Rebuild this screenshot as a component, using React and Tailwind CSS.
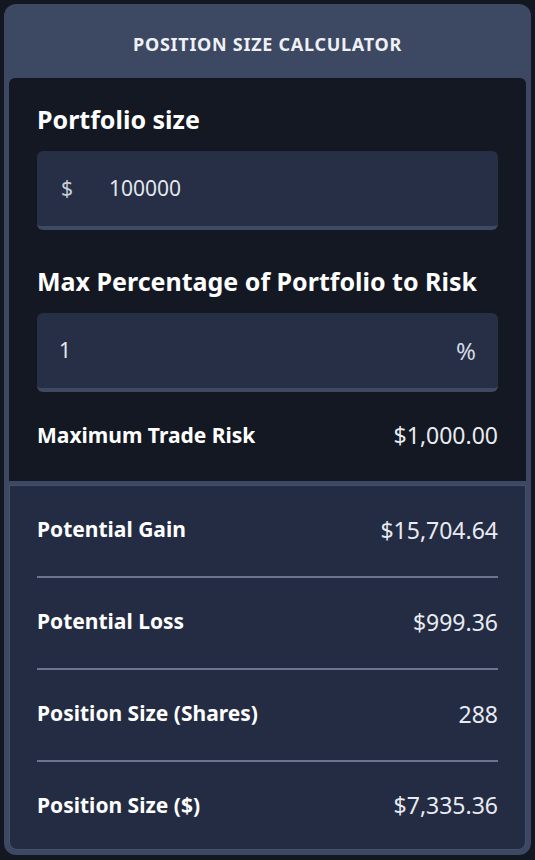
export default function App() {
  const rows = [
    { label: 'Potential Gain', value: '$15,704.64' },
    { label: 'Potential Loss', value: '$999.36' },
    { label: 'Position Size (Shares)', value: '288' },
    { label: 'Position Size ($)', value: '$7,335.36' },
  ];

  return (
    <div
      className="w-[535px] h-[860px] bg-[#121722] p-1 text-white"
      style={{ fontFamily: '"Noto Sans", "Open Sans", sans-serif' }}
    >
      <div className="h-[851px] rounded-xl bg-[#3d4862] px-[5px] pb-[5px] flex flex-col">
        <div className="h-[74px] shrink-0 flex items-center justify-center pt-[6px] text-[18px] font-bold tracking-[0.04em] text-[#eef1f6]">
          POSITION SIZE CALCULATOR
        </div>

        {/* inputs */}
        <div className="shrink-0 bg-[#131822] rounded-t-md px-7 pt-[24px] pb-[28px]">
          <div className="text-[25px] font-bold leading-[34px] mb-[15px]">Portfolio size</div>
          <div className="h-[79px] rounded-md bg-[#262f46] border-b-[4px] border-[#3f4963] flex items-center px-6 text-[21px] text-[#e3e7ee]">
            <span className="w-[48px] text-[#c9cfdb]">$</span>
            <span>100000</span>
          </div>

          <div className="text-[25px] font-bold leading-[34px] mt-[34px] mb-[15px]">Max Percentage of Portfolio to Risk</div>
          <div className="h-[79px] rounded-md bg-[#262f46] border-b-[4px] border-[#3f4963] flex items-center justify-between px-[22px] text-[21px] text-[#e3e7ee]">
            <span>1</span>
            <span className="text-[24px] text-[#d5dae3]">%</span>
          </div>

          <div className="flex items-center justify-between mt-[26px]">
            <span className="text-[21px] font-bold">Maximum Trade Risk</span>
            <span className="text-[23px] text-[#e8ebf1]">$1,000.00</span>
          </div>
        </div>

        {/* results */}
        <div className="mt-[4px] flex-1 flex flex-col rounded-b-lg bg-[#232c43] border border-[#46516b] px-[27px]">
          {rows.map((row, i) => (
            <div
              key={row.label}
              className={
                'flex items-center justify-between ' +
                (i < rows.length - 1 ? 'h-[92px] shrink-0 pb-[1px] border-b-2 border-[#6a7590]' : 'flex-1 pb-[0px]')
              }
            >
              <span className="text-[21px] font-bold">{row.label}</span>
              <span className="text-[23px] text-[#e8ebf1]">{row.value}</span>
            </div>
          ))}
        </div>
      </div>
    </div>
  );
}
